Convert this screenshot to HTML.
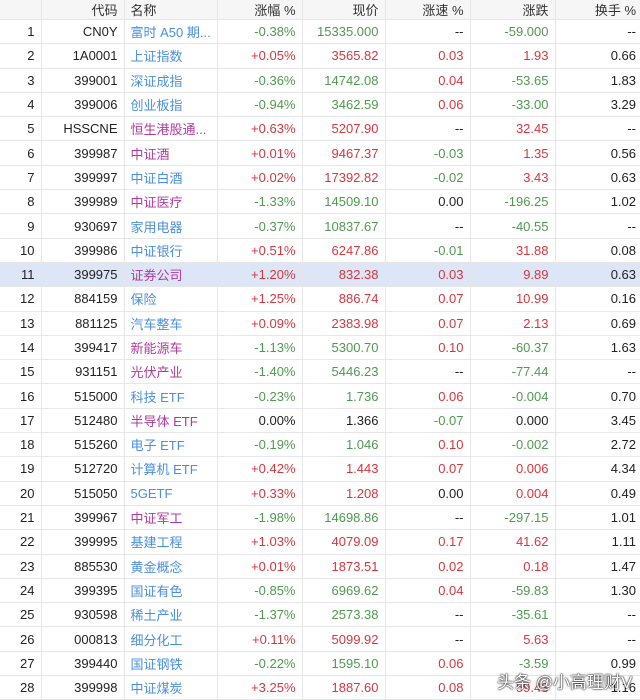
<!DOCTYPE html>
<html><head><meta charset="utf-8"><style>
body{margin:0;width:640px;height:699px;overflow:hidden;background:#fff;font-family:"Liberation Sans","Noto Sans CJK SC",sans-serif;font-size:13px;color:#222;position:relative}
table{border-collapse:collapse;table-layout:fixed;width:640px;position:absolute;left:0;top:0}
td,th{border-right:1px solid #e6e6e6;border-bottom:1px solid #e6e6e6;padding:0 6px;white-space:nowrap;overflow:hidden;text-align:right;font-weight:normal}
td:last-child,th:last-child{border-right:none;padding-right:4px}
th{height:19px;background:#f6f6f6;color:#333;font-size:13px}
tr.r td{height:23.3px}
td.n,th.n{text-align:left;padding-left:6px}
.b{color:#4a8fe0}.p{color:#b03a9e}.u{color:#d6373f}.d{color:#4f9a4f}.g{color:#999}
tr.h td{background:#dce6f7}
.wm{position:absolute;left:497px;top:668px;font-size:17px;color:#fff;text-shadow:0 0 2px #000,0 0 1px #000;letter-spacing:0}
</style></head><body>
<table>
<colgroup><col style="width:41px"><col style="width:83px"><col style="width:93px"><col style="width:85px"><col style="width:83px"><col style="width:85px"><col style="width:85px"><col style="width:85px"></colgroup>
<tr><th></th><th>代码</th><th class="n">名称</th><th>涨幅 %</th><th>现价</th><th>涨速 %</th><th>涨跌</th><th>换手 %</th></tr>
<tr class="r"><td>1</td><td>CN0Y</td><td class="n b">富时 A50 期...</td><td class="d">-0.38%</td><td class="d">15335.000</td><td>--</td><td class="d">-59.000</td><td>--</td></tr>
<tr class="r"><td>2</td><td>1A0001</td><td class="n b">上证指数</td><td class="u">+0.05%</td><td class="u">3565.82</td><td class="u">0.03</td><td class="u">1.93</td><td>0.66</td></tr>
<tr class="r"><td>3</td><td>399001</td><td class="n b">深证成指</td><td class="d">-0.36%</td><td class="d">14742.08</td><td class="u">0.04</td><td class="d">-53.65</td><td>1.83</td></tr>
<tr class="r"><td>4</td><td>399006</td><td class="n b">创业板指</td><td class="d">-0.94%</td><td class="d">3462.59</td><td class="u">0.06</td><td class="d">-33.00</td><td>3.29</td></tr>
<tr class="r"><td>5</td><td>HSSCNE</td><td class="n p">恒生港股通...</td><td class="u">+0.63%</td><td class="u">5207.90</td><td>--</td><td class="u">32.45</td><td>--</td></tr>
<tr class="r"><td>6</td><td>399987</td><td class="n p">中证酒</td><td class="u">+0.01%</td><td class="u">9467.37</td><td class="d">-0.03</td><td class="u">1.35</td><td>0.56</td></tr>
<tr class="r"><td>7</td><td>399997</td><td class="n b">中证白酒</td><td class="u">+0.02%</td><td class="u">17392.82</td><td class="d">-0.02</td><td class="u">3.43</td><td>0.63</td></tr>
<tr class="r"><td>8</td><td>399989</td><td class="n p">中证医疗</td><td class="d">-1.33%</td><td class="d">14509.10</td><td>0.00</td><td class="d">-196.25</td><td>1.02</td></tr>
<tr class="r"><td>9</td><td>930697</td><td class="n b">家用电器</td><td class="d">-0.37%</td><td class="d">10837.67</td><td>--</td><td class="d">-40.55</td><td>--</td></tr>
<tr class="r"><td>10</td><td>399986</td><td class="n b">中证银行</td><td class="u">+0.51%</td><td class="u">6247.86</td><td class="d">-0.01</td><td class="u">31.88</td><td>0.08</td></tr>
<tr class="r h"><td>11</td><td>399975</td><td class="n p">证券公司</td><td class="u">+1.20%</td><td class="u">832.38</td><td class="u">0.03</td><td class="u">9.89</td><td>0.63</td></tr>
<tr class="r"><td>12</td><td>884159</td><td class="n b">保险</td><td class="u">+1.25%</td><td class="u">886.74</td><td class="u">0.07</td><td class="u">10.99</td><td>0.16</td></tr>
<tr class="r"><td>13</td><td>881125</td><td class="n b">汽车整车</td><td class="u">+0.09%</td><td class="u">2383.98</td><td class="u">0.07</td><td class="u">2.13</td><td>0.69</td></tr>
<tr class="r"><td>14</td><td>399417</td><td class="n p">新能源车</td><td class="d">-1.13%</td><td class="d">5300.70</td><td class="u">0.10</td><td class="d">-60.37</td><td>1.63</td></tr>
<tr class="r"><td>15</td><td>931151</td><td class="n p">光伏产业</td><td class="d">-1.40%</td><td class="d">5446.23</td><td>--</td><td class="d">-77.44</td><td>--</td></tr>
<tr class="r"><td>16</td><td>515000</td><td class="n b">科技 ETF</td><td class="d">-0.23%</td><td class="d">1.736</td><td class="u">0.06</td><td class="d">-0.004</td><td>0.70</td></tr>
<tr class="r"><td>17</td><td>512480</td><td class="n p">半导体 ETF</td><td>0.00%</td><td>1.366</td><td class="d">-0.07</td><td>0.000</td><td>3.45</td></tr>
<tr class="r"><td>18</td><td>515260</td><td class="n b">电子 ETF</td><td class="d">-0.19%</td><td class="d">1.046</td><td class="u">0.10</td><td class="d">-0.002</td><td>2.72</td></tr>
<tr class="r"><td>19</td><td>512720</td><td class="n b">计算机 ETF</td><td class="u">+0.42%</td><td class="u">1.443</td><td class="u">0.07</td><td class="u">0.006</td><td>4.34</td></tr>
<tr class="r"><td>20</td><td>515050</td><td class="n b">5GETF</td><td class="u">+0.33%</td><td class="u">1.208</td><td>0.00</td><td class="u">0.004</td><td>0.49</td></tr>
<tr class="r"><td>21</td><td>399967</td><td class="n p">中证军工</td><td class="d">-1.98%</td><td class="d">14698.86</td><td>--</td><td class="d">-297.15</td><td>1.01</td></tr>
<tr class="r"><td>22</td><td>399995</td><td class="n b">基建工程</td><td class="u">+1.03%</td><td class="u">4079.09</td><td class="u">0.17</td><td class="u">41.62</td><td>1.11</td></tr>
<tr class="r"><td>23</td><td>885530</td><td class="n b">黄金概念</td><td class="u">+0.01%</td><td class="u">1873.51</td><td class="u">0.02</td><td class="u">0.18</td><td>1.47</td></tr>
<tr class="r"><td>24</td><td>399395</td><td class="n b">国证有色</td><td class="d">-0.85%</td><td class="d">6969.62</td><td class="u">0.04</td><td class="d">-59.83</td><td>1.30</td></tr>
<tr class="r"><td>25</td><td>930598</td><td class="n b">稀土产业</td><td class="d">-1.37%</td><td class="d">2573.38</td><td>--</td><td class="d">-35.61</td><td>--</td></tr>
<tr class="r"><td>26</td><td>000813</td><td class="n b">细分化工</td><td class="u">+0.11%</td><td class="u">5099.92</td><td>--</td><td class="u">5.63</td><td>--</td></tr>
<tr class="r"><td>27</td><td>399440</td><td class="n b">国证钢铁</td><td class="d">-0.22%</td><td class="d">1595.10</td><td class="u">0.06</td><td class="d">-3.59</td><td>0.99</td></tr>
<tr class="r"><td>28</td><td>399998</td><td class="n b">中证煤炭</td><td class="u">+3.25%</td><td class="u">1887.60</td><td class="u">0.08</td><td class="u">59.43</td><td>1.16</td></tr>
</table>
<div class="wm">头条 @小高理财V</div>
</body></html>
